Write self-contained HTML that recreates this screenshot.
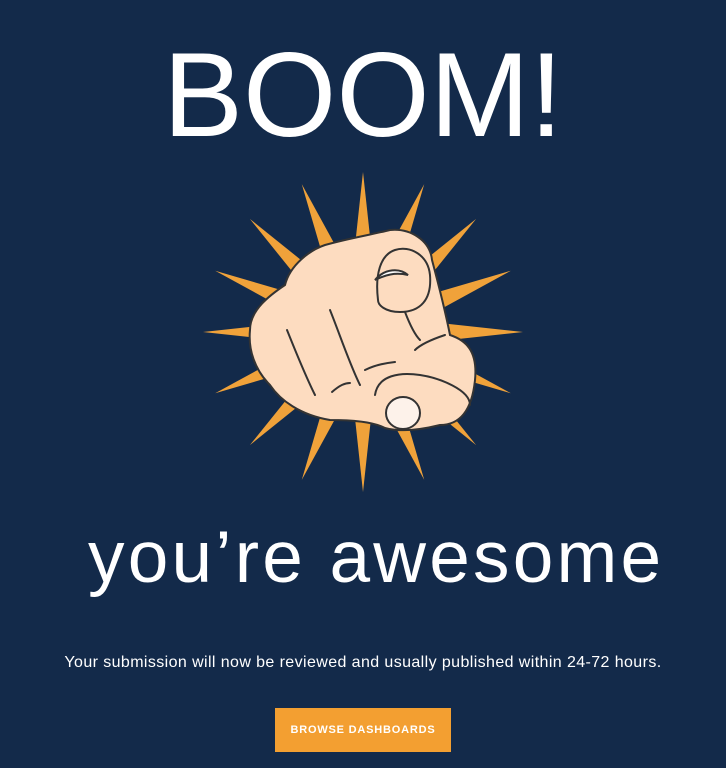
<!DOCTYPE html>
<html><head><meta charset="utf-8"><style>
html,body{margin:0;padding:0;}
body{width:726px;height:768px;background:#132a4a;position:relative;overflow:hidden;font-family:"Liberation Sans",sans-serif;color:#fff;}
.boom{position:absolute;left:0;width:726px;top:30px;text-align:center;font-size:120px;line-height:130px;font-weight:300;letter-spacing:0px;}
.aw{position:absolute;left:88px;top:518px;font-size:73px;line-height:80px;letter-spacing:3.2px;}
.p{position:absolute;left:0;width:726px;text-align:center;top:654px;font-size:16px;letter-spacing:0.4px;}
.btn{position:absolute;left:275px;top:708px;width:176px;height:44px;background:#f39f31;color:#fff;font-size:11px;font-weight:bold;letter-spacing:0.8px;text-align:center;line-height:44px;}
svg{position:absolute;left:0;top:0;}
</style></head><body>
<div class="boom">BOOM!</div>
<svg width="726" height="768">
<defs><radialGradient id="g" cx="363" cy="332" r="160" gradientUnits="userSpaceOnUse"><stop offset="0.35" stop-color="#fadcaa"/><stop offset="1" stop-color="#f0a23a"/></radialGradient></defs>
<g fill="url(#g)" transform="translate(363,332)">
<polygon points="0,-160 13,-40 -13,-40" transform="rotate(0)"/>
<polygon points="0,-160 13,-40 -13,-40" transform="rotate(22.5)"/>
<polygon points="0,-160 13,-40 -13,-40" transform="rotate(45)"/>
<polygon points="0,-160 13,-40 -13,-40" transform="rotate(67.5)"/>
<polygon points="0,-160 13,-40 -13,-40" transform="rotate(90)"/>
<polygon points="0,-160 13,-40 -13,-40" transform="rotate(112.5)"/>
<polygon points="0,-160 13,-40 -13,-40" transform="rotate(135)"/>
<polygon points="0,-160 13,-40 -13,-40" transform="rotate(157.5)"/>
<polygon points="0,-160 13,-40 -13,-40" transform="rotate(180)"/>
<polygon points="0,-160 13,-40 -13,-40" transform="rotate(202.5)"/>
<polygon points="0,-160 13,-40 -13,-40" transform="rotate(225)"/>
<polygon points="0,-160 13,-40 -13,-40" transform="rotate(247.5)"/>
<polygon points="0,-160 13,-40 -13,-40" transform="rotate(270)"/>
<polygon points="0,-160 13,-40 -13,-40" transform="rotate(292.5)"/>
<polygon points="0,-160 13,-40 -13,-40" transform="rotate(315)"/>
<polygon points="0,-160 13,-40 -13,-40" transform="rotate(337.5)"/>
</g>
<g stroke="#333" stroke-width="2" stroke-linecap="round" fill="#fddcc0">
<path d="M250,330 C250,310 270,295 285,285 C290,265 310,250 325,245 C350,238 370,235 390,230 C410,228 430,240 432,260 C440,290 445,310 450,335 C465,340 478,350 475,380 C472,410 460,425 440,425 C420,430 400,432 385,428 C370,420 340,420 330,420 C300,415 280,400 270,385 C255,370 248,350 250,330 Z"/>
<path d="M375,395 C378,375 400,372 420,375 C440,378 470,390 470,405" fill="none"/>
<path d="M378,300 C375,275 380,255 395,250 C410,245 428,255 430,275 C432,300 420,312 400,312 C385,312 378,305 378,300 Z"/>
<path d="M375,280 C385,268 400,268 408,275 C395,272 385,275 375,280 Z" fill="#fff"/>
<path d="M287,330 C295,350 305,375 315,395" fill="none"/>
<path d="M330,310 C340,335 350,365 360,385" fill="none"/>
<path d="M365,370 C375,365 385,363 395,362" fill="none"/>
<path d="M332,392 C340,385 345,383 350,383" fill="none"/>
<path d="M405,312 C410,325 415,335 420,340" fill="none"/>
<path d="M445,335 C430,340 420,345 415,350" fill="none"/>
<ellipse cx="403" cy="413" rx="17" ry="16" fill="#fdf2ea"/>
</g>
</svg>
<div class="aw">you’re awesome</div>
<div class="p">Your submission will now be reviewed and usually published within 24-72 hours.</div>
<div class="btn">BROWSE DASHBOARDS</div>
</body></html>
